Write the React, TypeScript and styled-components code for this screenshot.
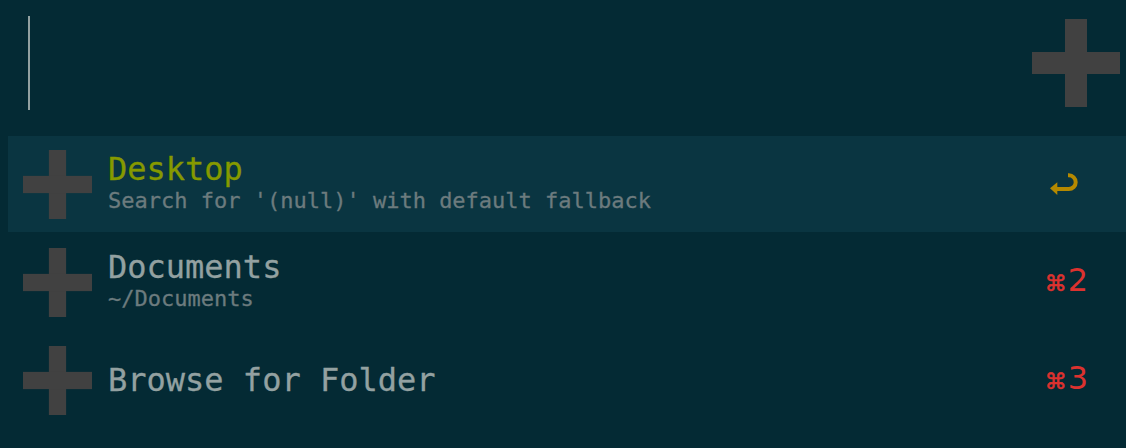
import React, { FC } from "react";
import styled, { createGlobalStyle } from "styled-components";

// Styles
const GlobalStyle = createGlobalStyle`
  html, body {
    margin: 0;
    padding: 0;
    background: #042a34;
  }
`;

const Window = styled.div`
  background: #042a34;
  height: 448px;
  width: 1126px;
  overflow: hidden;
`;

const SearchBar = styled.div`
  align-items: center;
  display: flex;
  height: 126px;
  margin-bottom: 10px;
  padding: 0 6px 0 28px;
`;

const Caret = styled.div`
  background: #93a1a1;
  height: 94px;
  width: 2px;
`;

const Spacer = styled.div`
  flex: 1;
`;

const List = styled.ul`
  display: flex;
  flex-direction: column;
  gap: 2px;
  list-style: none;
  margin: 0 0 0 8px;
  padding: 0;
`;

const Row = styled.li<{ $selected?: boolean }>`
  align-items: center;
  background: ${(p) => (p.$selected ? "#0a3541" : "transparent")};
  display: flex;
  height: 96px;
  padding: 0 38px 0 15px;
`;

const Text = styled.div`
  display: flex;
  flex-direction: column;
  font-family: "DejaVu Sans Mono", Menlo, monospace;
  margin-left: 16px;
`;

const Title = styled.div<{ $selected?: boolean }>`
  color: ${(p) => (p.$selected ? "#859900" : "#93a1a1")};
  font-size: 32px;
  line-height: 32px;
  white-space: pre;
  -webkit-text-stroke: 0.3px currentColor;
`;

const Subtitle = styled.div`
  color: #6c7b7e;
  font-size: 22px;
  line-height: 28px;
  margin-top: 2px;
  white-space: pre;
  -webkit-text-stroke: 0.3px currentColor;
`;

const Shortcut = styled.div`
  align-items: baseline;
  color: #dc322f;
  display: flex;
  font-family: "DejaVu Sans", sans-serif;
  font-size: 32px;
  line-height: 32px;
`;

const Cmd = styled.span`
  font-size: 22px;
  margin-right: 1px;
  -webkit-text-stroke: 0.6px currentColor;
`;

const ReturnSvg = styled.svg`
  display: block;
  margin-right: 8px;
`;

// Components
const Plus: FC<{ size: number }> = ({ size }) => (
  <svg width={size} height={size} viewBox="0 0 8 8" style={{ flexShrink: 0 }}>
    <rect x="3" y="0" width="2" height="8" fill="#414141" />
    <rect x="0" y="3" width="8" height="2" fill="#414141" />
  </svg>
);

const ReturnIcon: FC = () => (
  <ReturnSvg width="30" height="24" viewBox="0 0 30 24">
    <polygon points="0,16.3 7.3,10.3 7.3,23" fill="#b58900" />
    <path
      d="M 6.5 17 H 18.85 A 6.85 6.85 0 0 0 18.85 3.3 H 18"
      fill="none"
      stroke="#b58900"
      strokeWidth="4"
    />
  </ReturnSvg>
);

interface Item {
  title: string;
  subtitle?: string;
  key?: string;
  selected?: boolean;
}

const items: Item[] = [
  {
    title: "Desktop",
    subtitle: "Search for '(null)' with default fallback",
    selected: true,
  },
  { title: "Documents", subtitle: "~/Documents", key: "2" },
  { title: "Browse for Folder", key: "3" },
];

const App: FC = () => (
  <>
    <GlobalStyle />
    <Window>
      <SearchBar>
        <Caret />
        <Spacer />
        <Plus size={88} />
      </SearchBar>
      <List>
        {items.map((item) => (
          <Row key={item.title} $selected={item.selected}>
            <Plus size={69} />
            <Text>
              <Title $selected={item.selected}>{item.title}</Title>
              {item.subtitle && <Subtitle>{item.subtitle}</Subtitle>}
            </Text>
            <Spacer />
            {item.selected ? (
              <ReturnIcon />
            ) : (
              <Shortcut>
                <Cmd>⌘</Cmd>
                {item.key}
              </Shortcut>
            )}
          </Row>
        ))}
      </List>
    </Window>
  </>
);

export default App;
